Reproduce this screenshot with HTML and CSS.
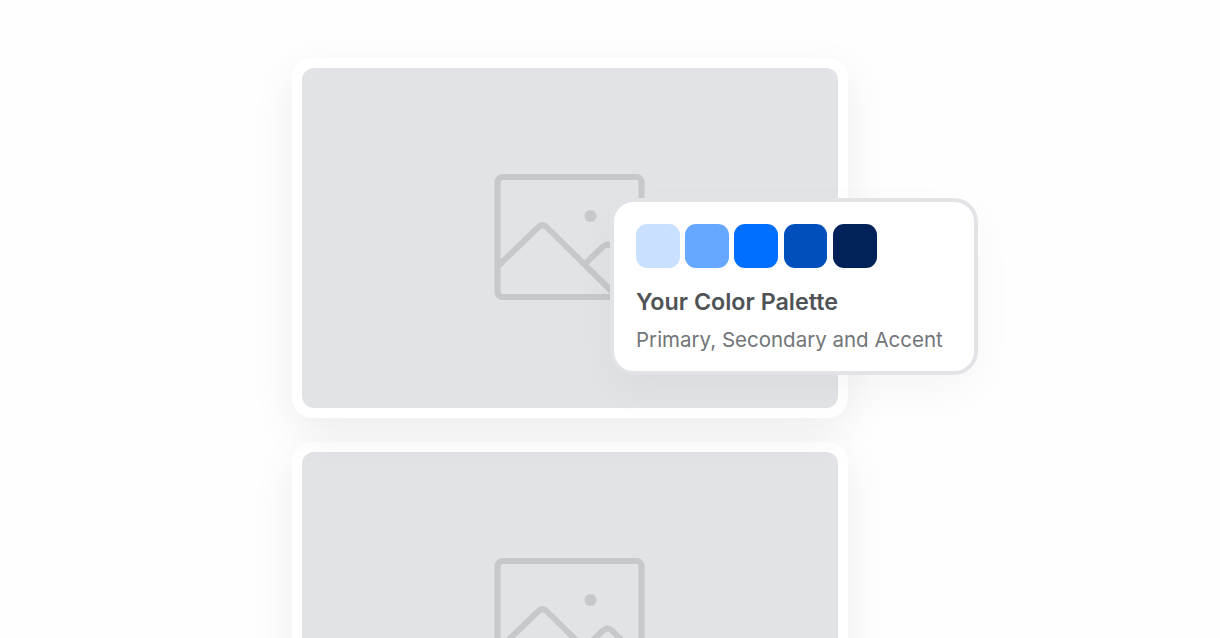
FILE: index.html
```html
<!DOCTYPE html>
<html lang="en">
<head>
    <meta charset="UTF-8">
    <meta name="viewport" content="width=device-width, initial-scale=1.0">
    <title>Your Color Palette</title>
    <link rel="stylesheet" href="styles.css">
</head>
<body>
    <main class="gallery">
        <div class="photo-card">
            <div class="photo">
                <svg class="photo-icon" viewBox="0 0 151 126" fill="none">
                    <rect x="3.5" y="3" width="144" height="120" rx="5"/>
                    <path d="M4 92L44 53.500Q48.500 49 53 53.500L121.500 121"/>
                    <path d="M92 89L108.500 73Q113.500 68 118.500 73L147 101"/>
                    <circle cx="96.500" cy="42" r="6"/>
                </svg>
            </div>
            <div class="palette">
                <div class="swatches">
                    <span class="swatch swatch-lightest"></span>
                    <span class="swatch swatch-light"></span>
                    <span class="swatch swatch-primary"></span>
                    <span class="swatch swatch-dark"></span>
                    <span class="swatch swatch-darkest"></span>
                </div>
                <h2>Your Color Palette</h2>
                <p>Primary, Secondary and Accent</p>
            </div>
        </div>
        <div class="photo-card">
            <div class="photo">
                <svg class="photo-icon" viewBox="0 0 151 126" fill="none">
                    <rect x="3.5" y="3" width="144" height="120" rx="5"/>
                    <path d="M4 92L44 53.500Q48.500 49 53 53.500L121.500 121"/>
                    <path d="M92 89L108.500 73Q113.500 68 118.500 73L147 101"/>
                    <circle cx="96.500" cy="42" r="6"/>
                </svg>
            </div>
        </div>
    </main>
</body>
</html>
```
FILE: styles.css
```css
:root {
    --photo-color: #e1e3e6;
    --icon-color: #c6c9cc;
    --title-color: #4f5356;
    --text-color: #727578;
}

* {
    margin: 0;
    padding: 0;
    box-sizing: border-box;
}

body {
    height: 100vh;
    overflow: hidden;
    background-color: #fefefe;
    font-family: Inter, sans-serif;
}

.gallery {
    display: flex;
    flex-direction: column;
    gap: 24px;
    width: 556px;
    margin-left: 292px;
    padding-top: 58px;
}

.photo-card {
    position: relative;
    padding: 10px;
    border-radius: 20px;
    background-color: white;
    box-shadow: 0 14px 44px rgba(0, 0, 0, 0.07);
}

/* keeps the palette above the next card */
.photo-card:first-child {
    z-index: 1;
}

.photo {
    display: flex;
    justify-content: center;
    align-items: center;
    height: 340px;
    border-radius: 12px;
    background-color: var(--photo-color);
}

.photo-icon {
    width: 151px;
    height: 126px;
    margin-right: 1px;
    margin-bottom: 2px;
}

.photo-icon rect,
.photo-icon path {
    stroke: var(--icon-color);
    stroke-width: 6;
}

.photo-icon circle {
    fill: var(--icon-color);
}

.palette {
    position: absolute;
    top: 140px;
    left: 318px;
    width: 368px;
    height: 177px;
    padding: 22px;
    border: 4px solid var(--photo-color);
    border-radius: 24px;
    background-color: white;
    box-shadow: 0 16px 44px rgba(0, 0, 0, 0.035);
}

.swatches {
    display: flex;
    gap: 5.3px;
    margin-bottom: 19px;
}

.swatch {
    width: 43.9px;
    height: 43.9px;
    border-radius: 11px;
}

.swatch-lightest {
    background-color: #c9e0ff;
}

.swatch-light {
    background-color: #66a8ff;
}

.swatch-primary {
    background-color: #006fff;
}

.swatch-dark {
    background-color: #004fbd;
}

.swatch-darkest {
    background-color: #002259;
}

.palette h2 {
    margin-bottom: 10px;
    color: var(--title-color);
    font-size: 23.3px;
    font-weight: 600;
    line-height: 29px;
    white-space: nowrap;
}

.palette p {
    color: var(--text-color);
    font-size: 20.5px;
    line-height: 28px;
    white-space: nowrap;
}
```
